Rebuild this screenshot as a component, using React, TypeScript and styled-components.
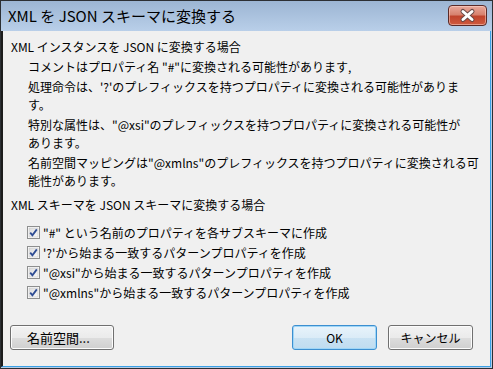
import styled, { createGlobalStyle } from 'styled-components'

const GlobalStyle = createGlobalStyle`
	html, body {
		margin: 0;
		padding: 0;
		background: #ffffff;
	}
	body {
		font-family: "Noto Sans CJK JP", "Liberation Sans", sans-serif;
		font-size: 12px;
		color: #000;
	}
`

const notes = [
	['コメントはプロパティ名 "#"に変換される可能性があります,'],
	["処理命令は、'?'のプレフィックスを持つプロパティに変換される可能性がありま", 'す。'],
	['特別な属性は、"@xsi"のプレフィックスを持つプロパティに変換される可能性が', 'あります。'],
	['名前空間マッピングは"@xmlns"のプレフィックスを持つプロパティに変換される可', '能性があります。'],
]

const options = [
	'"#" という名前のプロパティを各サブスキーマに作成',
	"'?'から始まる一致するパターンプロパティを作成",
	'"@xsi"から始まる一致するパターンプロパティを作成',
	'"@xmlns"から始まる一致するパターンプロパティを作成',
]

function CloseIcon() {
	return (
		<svg width="39" height="21" viewBox="0 0 39 21">
			<path d="M15 6.5 L24 14.5 M24 6.5 L15 14.5" stroke="#6b4a48" strokeWidth="5" strokeLinecap="round" />
			<path d="M15 6.5 L24 14.5 M24 6.5 L15 14.5" stroke="#ffffff" strokeWidth="3" strokeLinecap="round" />
		</svg>
	)
}

function CheckMark() {
	return (
		<svg width="13" height="13" viewBox="0 0 13 13">
			<defs>
				<linearGradient id="cbfill" x1="0" y1="0" x2="1" y2="1">
					<stop offset="0" stopColor="#dcdcdc" />
					<stop offset="1" stopColor="#fbfbfb" />
				</linearGradient>
			</defs>
			<rect x="0.5" y="0.5" width="12" height="12" fill="#fff" stroke="#8e8f8f" />
			<rect x="2" y="2" width="9" height="9" fill="url(#cbfill)" stroke="#c6c6c6" strokeWidth="0.6" />
			<path d="M3.2 6.6 L5.4 9.2 L9.8 3.4" fill="none" stroke="#2f4d94" strokeWidth="1.8" />
		</svg>
	)
}

function App() {
	return (
		<>
			<GlobalStyle />
			<Frame>
				<TitleBar>
					<Title>XML を JSON スキーマに変換する</Title>
					<CloseButton>
						<CloseIcon />
					</CloseButton>
				</TitleBar>
				<Body>
					<Section>
						<Heading>XML インスタンスを JSON に変換する場合</Heading>
						<Notes>
							{notes.map((lines, i) => (
								<Note key={i}>{lines.join('\n')}</Note>
							))}
						</Notes>
					</Section>
					<Section className="schema">
						<Heading>XML スキーマを JSON スキーマに変換する場合</Heading>
						<Options>
							{options.map((label) => (
								<Option key={label}>
									<CheckMark />
									<span>{label}</span>
								</Option>
							))}
						</Options>
					</Section>
					<Buttons>
						<Button>名前空間...</Button>
						<Spacer />
						<Button $primary>OK</Button>
						<Button>キャンセル</Button>
					</Buttons>
				</Body>
			</Frame>
		</>
	)
}

const Frame = styled.div`
	width: 493px;
	height: 369px;
	box-sizing: border-box;
	border: 1px solid #2c2f33;
	background: linear-gradient(#9cb5d3 0, #b9cfe9 30px, #b4cbe6 100%);
	display: flex;
	flex-direction: column;
`

const TitleBar = styled.div`
	height: 30px;
	flex: none;
	display: flex;
	align-items: flex-start;
	padding-left: 7px;
	padding-right: 5px;
`

const Title = styled.div`
	flex: 1;
	font-size: 15px;
	line-height: 30px;
	color: #000;
	white-space: nowrap;
`

const CloseButton = styled.div`
	width: 39px;
	height: 21px;
	margin-top: 4px;
	box-sizing: border-box;
	border: 1px solid #5a2a28;
	border-radius: 4px;
	background: linear-gradient(#e9a99c 0%, #d7826f 45%, #c0442d 55%, #cf5a3f 100%);
	box-shadow: inset 0 0 0 1px rgba(255, 220, 210, 0.5);
	display: flex;
	align-items: center;
	justify-content: center;
	overflow: hidden;

	svg {
		margin: -1px;
	}
`

const Body = styled.div`
	flex: 1;
	margin: 0 1px 1px 0;
	background: #f0f0f0;
	border-left: 2px solid #1c1c1c;
	border-right: 1px solid #3aa0e6;
	border-bottom: 1px solid #3aa0e6;
	display: flex;
	flex-direction: column;
	padding: 7px 17px 16px 7px;
`

const Section = styled.div`
	display: flex;
	flex-direction: column;
	padding-left: 1px;

	&.schema {
		margin-top: 6px;
	}
`

const Heading = styled.div`
	line-height: 18px;
	white-space: nowrap;
`

const Notes = styled.div`
	display: flex;
	flex-direction: column;
	gap: 2px;
	margin-top: 2px;
	padding-left: 17px;
`

const Note = styled.div`
	line-height: 18px;
	white-space: pre;
`

const Options = styled.div`
	display: flex;
	flex-direction: column;
	margin-top: 8px;
	padding-left: 16px;
`

const Option = styled.div`
	height: 20px;
	display: flex;
	align-items: center;
	gap: 3px;
	white-space: nowrap;

	svg {
		flex: none;
	}
`

const Buttons = styled.div`
	margin-top: auto;
	display: flex;
	align-items: center;
	gap: 11px;
`

const Spacer = styled.div`
	flex: 1;
`

const Button = styled.div<{ $primary?: boolean }>`
	height: 25px;
	box-sizing: border-box;
	min-width: 85px;
	padding: 0 10px;
	display: flex;
	align-items: center;
	justify-content: center;
	border-radius: 3px;
	font-size: 12px;
	border: 1px solid ${(p) => (p.$primary ? '#3c8fd0' : '#707070')};
	background: ${(p) =>
		p.$primary
			? 'linear-gradient(#e8f3fb 0%, #dbecf7 50%, #c9e2f3 51%, #bfdcf0 100%)'
			: 'linear-gradient(#f2f2f2 0%, #ebebeb 50%, #dddddd 51%, #cfcfcf 100%)'};
	box-shadow: inset 0 0 0 1px ${(p) => (p.$primary ? '#9fd6f7' : '#fcfcfc')};

	&:first-child {
		width: 104px;
		justify-content: flex-start;
		padding-left: 16px;
		font-size: 13px;
	}
`

export default App
